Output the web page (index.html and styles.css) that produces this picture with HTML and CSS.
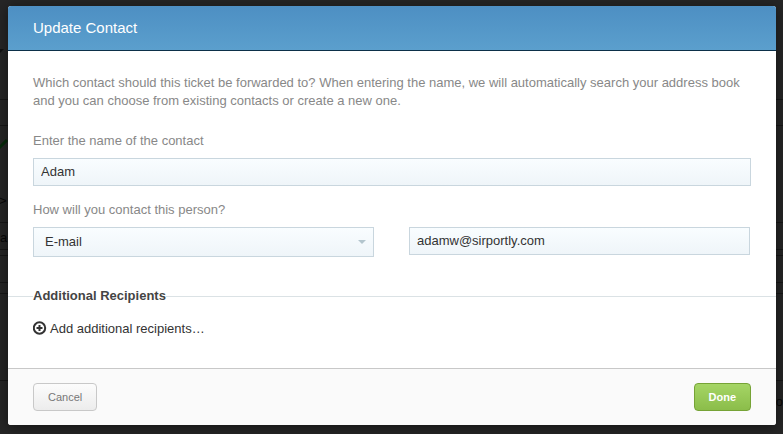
FILE: index.html
```html
<!DOCTYPE html>
<html lang="en">
<head>
<meta charset="utf-8">
<title>Update Contact</title>
<link rel="stylesheet" href="styles.css">
</head>
<body>
<svg class="backdrop" aria-hidden="true" preserveAspectRatio="xMinYMin slice">
  <g stroke="#171717">
    <path d="M0 99.5H2000M0 125.5H2000M0 222.5H2000M0 249.5H2000M0 255.5H2000M0 282.5H2000M0 293.5H2000M0 380.5H2000"/>
  </g>
  <path d="M0 49h4l-4 4z" fill="#111"/>
  <path d="M-3 144l3 3 7-7" fill="none" stroke="#062b0a" stroke-width="3"/>
</svg>
<span class="ghost ghost-arrow" aria-hidden="true">&gt;</span>
<span class="ghost ghost-left" aria-hidden="true">a</span>
<span class="ghost ghost-right" aria-hidden="true">o</span>
<form class="dialog">
  <header class="dialog-header"><h1>Update Contact</h1></header>
  <main class="dialog-body">
    <p class="intro">Which contact should this ticket be forwarded to? When entering the name, we will automatically search your address book and you can choose from existing contacts or create a new one.</p>
    <div class="field">
      <label for="name">Enter the name of the contact</label>
      <input id="name" type="text" value="Adam">
    </div>
    <div class="field">
      <label for="method">How will you contact this person?</label>
      <div class="methods">
        <div class="select">
          <select id="method"><option>E-mail</option></select>
        </div>
        <input type="text" value="adamw@sirportly.com" aria-label="E-mail address">
      </div>
    </div>
    <h2 class="section"><span>Additional Recipients</span></h2>
    <a class="add" href="#">
      <svg width="14" height="16" viewBox="0 0 14 16" fill="none" stroke="#333" stroke-width="2" aria-hidden="true"><circle cx="6.500" cy="7" r="5.700"/><path d="M6.500 4v6M3.500 7h6"/></svg>
      Add additional recipients…
    </a>
  </main>
  <footer class="dialog-footer">
    <button type="button" class="button">Cancel</button>
    <button type="submit" class="button primary">Done</button>
  </footer>
</form>
</body>
</html>
```
FILE: styles.css
```css
* { box-sizing: border-box; }
body {
  margin: 0;
  padding: 6px 7px 9px 8px;
  background: #262626;
  font: 13px/18px "Liberation Sans", Arial, sans-serif;
  color: #333;
}
.backdrop {
  position: absolute;
  inset: 0;
  width: 100%;
  height: 100%;
}
.ghost { position: absolute; color: #080808; }
.ghost-arrow { left: -1px; top: 192px; }
.ghost-left { left: 0; top: 229px; }
.ghost-right { right: 0; top: 393px; }
.dialog {
  position: relative;
  background: #fff;
  border-radius: 3px;
  overflow: hidden;
  box-shadow: 0 2px 14px rgba(0, 0, 0, .5);
}
.dialog-header {
  padding: 12px 25px;
  border-bottom: 1px solid #0c3049;
  background: linear-gradient(#4d8fc3, #5b9fcd);
}
.dialog-header h1 {
  margin: 0;
  font-size: 15px;
  line-height: 20px;
  font-weight: normal;
  color: #fff;
}
.dialog-body { padding: 23px 25px 30px; }
.intro { margin: 0 0 22px; color: #888; }
.field { margin-bottom: 15px; }
.field label { display: block; margin-bottom: 8px; color: #888; }
input, select {
  display: block;
  width: 100%;
  height: 28px;
  margin: 0;
  padding: 0 7px 2px;
  border: 1px solid #c9d6de;
  border-radius: 0;
  background: linear-gradient(#f9fdff, #eff5f9);
  font: inherit;
  color: #333;
}
.methods {
  display: grid;
  grid-template-columns: 1fr 1fr;
  column-gap: 35px;
  align-items: start;
  padding-right: 1px;
}
.select { position: relative; }
.select select { height: 30px; padding: 0 11px 1px; appearance: none; }
.select::after {
  content: "";
  position: absolute;
  right: 8px;
  top: 13px;
  border: 4px solid transparent;
  border-top-color: #b3c5cd;
  border-bottom: 0;
}
.section {
  display: flex;
  align-items: center;
  margin: 30px -25px 15px;
  font-size: 13px;
  line-height: 18px;
  color: #444;
}
.section::before, .section::after {
  content: "";
  height: 1px;
  background: #dbe2e5;
}
.section::before { width: 25px; }
.section::after { flex: 1; }
.add {
  display: flex;
  align-items: center;
  gap: 3px;
  color: #333;
  text-decoration: none;
}
.dialog-footer {
  display: flex;
  justify-content: space-between;
  padding: 14px 25px;
  border-top: 1px solid #c8c8c8;
  background: #fafafa;
}
.button {
  height: 28px;
  padding: 0 14px;
  border: 1px solid #c8c8c8;
  border-radius: 4px;
  background: linear-gradient(#fcfcfc, #ececec);
  font: 11px/16px "Liberation Sans", Arial, sans-serif;
  color: #777;
}
.primary {
  border-color: #76a336;
  background: linear-gradient(#a5d565, #8bbd4a);
  color: #fff;
  font-weight: bold;
}
```
